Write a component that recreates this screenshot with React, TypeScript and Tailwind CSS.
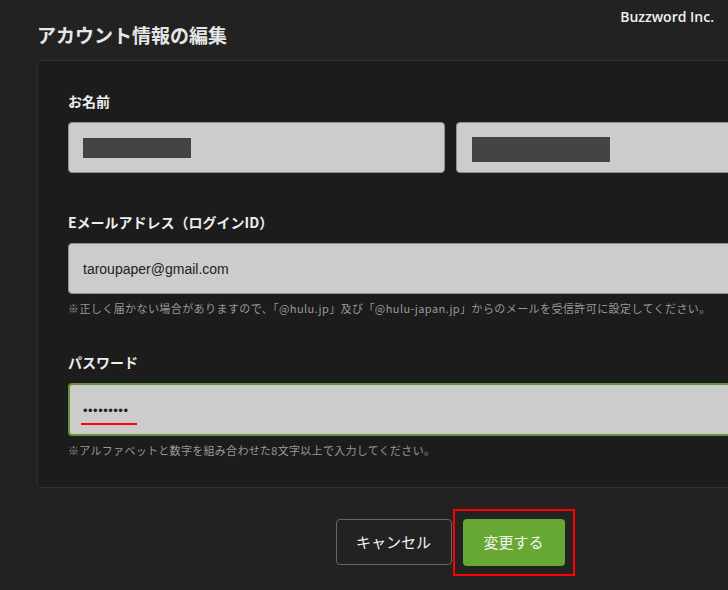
const jp = { fontFamily: '"Noto Sans CJK JP", "Noto Sans", sans-serif' }

function Label({ children, className = '' }: { children: React.ReactNode; className?: string }) {
  return <div className={`text-[14px] leading-[20px] font-bold text-[#eeeeee] ${className}`}>{children}</div>
}

function Note({ children, className = '' }: { children: React.ReactNode; className?: string }) {
  return <div className={`text-[11px] leading-[16px] text-[#999999] whitespace-nowrap ${className}`}>{children}</div>
}

export default function App() {
  return (
    <div className="w-[728px] h-[590px] overflow-hidden bg-[#222222]" style={jp}>
      {/* header */}
      <div className="flex justify-between items-start h-[60px]">
        <h1 className="pl-[37px] pt-[21px] text-[19px] leading-[28px] font-bold text-[#e6e6e6]">
          アカウント情報の編集
        </h1>
        <div
          className="pt-[7px] pr-[14px] text-[14px] leading-[20px] font-semibold text-[#f0f0f0]"
          style={{ fontFamily: '"Open Sans", "Noto Sans", sans-serif' }}
        >
          Buzzword Inc.
        </div>
      </div>

      <div className="ml-[37px] w-[826px]">
        {/* card */}
        <div className="bg-[#1c1c1c] border border-[#2f2f2f] rounded-[4px] px-[30px] pt-[30px] pb-[29px]">
          <Label>お名前</Label>
          <div className="flex gap-[11px] mt-[11px]">
            <div className="w-[377px] h-[51px] shrink-0 bg-[#cccccc] border border-[#8f8f8f] rounded-[4px] pl-[14px] pt-[15px]">
              <div className="w-[108px] h-[20px] bg-[#444444]" />
            </div>
            <div className="w-[377px] h-[51px] shrink-0 bg-[#cccccc] border border-[#8f8f8f] rounded-[4px] pl-[15px] pt-[14px]">
              <div className="w-[138px] h-[25px] bg-[#444444]" />
            </div>
          </div>

          <Label className="mt-[39px]">Eメールアドレス（ログインID）</Label>
          <div
            className="mt-[11px] h-[51px] bg-[#cccccc] border border-[#8f8f8f] rounded-[4px] pl-[14px] pt-[1px] flex items-center text-[14px] text-[#222222]"
            style={{ fontFamily: '"Liberation Sans", Arial, sans-serif' }}
          >
            taroupaper@gmail.com
          </div>
          <Note className="mt-[6px] tracking-[0.42px]">
            ※正しく届かない場合がありますので、「@hulu.jp」及び「@hulu-japan.jp」からのメールを受信許可に設定してください。
          </Note>

          <Label className="mt-[36px]">パスワード</Label>
          <div className="mt-[11px] h-[53px] bg-[#cccccc] border-2 border-[#5f9536] rounded-[4px] pl-[13px] pt-[9px] flex flex-col justify-center">
            <div
              className="text-[13px] leading-[14px] text-[#222222] tracking-[0.5px]"
              style={{ fontFamily: '"Liberation Sans", Arial, sans-serif' }}
            >
              •••••••••
            </div>
            <div className="mt-[5px] -ml-[2px] w-[56px] h-[2px] bg-[#ff0000]" />
          </div>
          <Note className="mt-[6px] tracking-[0.3px]">※アルファベットと数字を組み合わせた8文字以上で入力してください。</Note>
        </div>

        {/* buttons */}
        <div className="flex justify-center gap-[11px] mt-[31px]">
          <button className="w-[116px] h-[46px] border border-[#666666] rounded-[4px] text-[15px] text-[#f0f0f0]">
            キャンセル
          </button>
          <button className="relative w-[102px] h-[47px] bg-[#67a834] rounded-[4px] text-[15px] text-[#f4f4f4]">
            変更する
            <span className="absolute -inset-[10px] border-2 border-[#ff0000] pointer-events-none" />
          </button>
        </div>
      </div>
    </div>
  )
}
